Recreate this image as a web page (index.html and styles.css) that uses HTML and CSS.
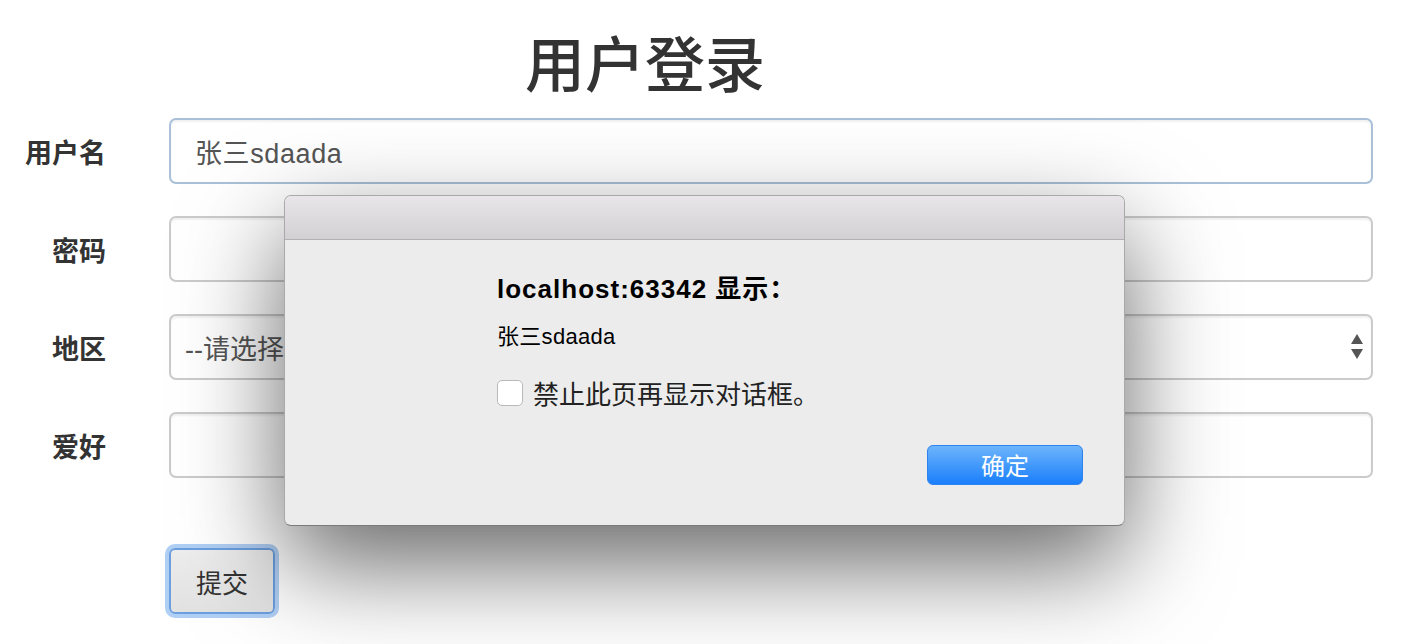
FILE: index.html
```html
<!DOCTYPE html>
<html lang="zh-CN">
<head>
<meta charset="utf-8">
<title>用户登录</title>
<link rel="stylesheet" href="styles.css">
</head>
<body>
<main class="page">
  <h1 class="title">用户登录</h1>
  <form class="form">
    <div class="row">
      <label class="label">用户名</label>
      <input class="control control-focus" type="text" value="张三sdaada">
    </div>
    <div class="row">
      <label class="label">密码</label>
      <input class="control" type="password" value="">
    </div>
    <div class="row">
      <label class="label">地区</label>
      <div class="control select">
        <span class="select-text">--请选择</span>
        <svg class="select-arrow" width="14" height="26" viewBox="0 0 14 26"><path d="M7 0 L13 10 L1 10 Z" fill="#555"/><path d="M1 15 L13 15 L7 25 Z" fill="#555"/></svg>
      </div>
    </div>
    <div class="row">
      <label class="label">爱好</label>
      <div class="control"></div>
    </div>
    <div class="row row-actions">
      <span></span>
      <div><button class="submit" type="button">提交</button></div>
    </div>
  </form>
</main>

<div class="dialog">
  <div class="dialog-titlebar"></div>
  <div class="dialog-body">
    <div class="dialog-content">
      <div class="dialog-heading">localhost:63342 显示：</div>
      <div class="dialog-message">张三sdaada</div>
      <label class="dialog-check"><span class="checkbox"></span><span>禁止此页再显示对话框。</span></label>
    </div>
    <div class="dialog-actions">
      <button class="ok" type="button">确定</button>
    </div>
  </div>
</div>
</body>
</html>
```

FILE: styles.css
```css
html, body {
  margin: 0;
  background: #fff;
}
body {
  font-family: "Liberation Sans", "Noto Sans CJK SC", sans-serif;
  color: #333;
  position: relative;
  height: 644px;
  overflow: hidden;
}
.page {
  padding: 24px 53px 0 0;
}
.title {
  margin: 0;
  font-size: 60px;
  font-weight: 500;
  line-height: 74px;
  text-align: center;
  padding-right: 83px;
  color: #333;
  font-family: "Noto Sans CJK SC", sans-serif;
}
.form {
  display: flex;
  flex-direction: column;
  gap: 32px;
  margin-top: 20px;
}
.row {
  display: grid;
  grid-template-columns: 106px 1fr;
  column-gap: 63px;
  align-items: center;
}
.label {
  text-align: right;
  font-weight: 700;
  font-size: 27px;
  color: #333;
  font-family: "Noto Sans CJK SC", sans-serif;
}
.control {
  display: block;
  width: 100%;
  height: 66px;
  box-sizing: border-box;
  border: 2px solid #cbcbcb;
  border-radius: 7px;
  padding: 0 24px;
  font-family: "Liberation Sans", "Noto Sans CJK SC", sans-serif;
  font-size: 27px;
  letter-spacing: 0.6px;
  color: #555;
  background: #fff;
  box-shadow: inset 0 2px 2px rgba(0,0,0,0.06);
  outline: none;
  margin: 0;
}
.control-focus {
  border-color: #a9c0d8;
}
.select {
  display: flex;
  align-items: center;
  justify-content: space-between;
  padding: 0 7px 0 14px;
  letter-spacing: 0;
}
.select-text {
  color: #555;
}
.row-actions {
  margin-top: 38px;
}
.submit {
  width: 106px;
  height: 66px;
  box-sizing: border-box;
  border: 2px solid #6b9fe0;
  border-radius: 6px;
  background: linear-gradient(#ededed, #e2e2e2);
  box-shadow: 0 0 0 4px rgba(112, 168, 236, 0.55);
  font-family: "Noto Sans CJK SC", sans-serif;
  font-size: 26px;
  color: #333;
  padding: 0;
  margin-left: 0;
}

.dialog {
  position: absolute;
  left: 284px;
  top: 195px;
  width: 841px;
  height: 331px;
  box-sizing: border-box;
  border: 1px solid #a9a9a9;
  border-bottom-color: #7a7a7a;
  border-radius: 7px;
  background: #ececec;
  box-shadow: 0 38px 100px rgba(0,0,0,0.6);
  display: flex;
  flex-direction: column;
  overflow: hidden;
}
.dialog-titlebar {
  height: 43px;
  flex: none;
  background: linear-gradient(#e8e6e8, #d2d0d2);
  border-bottom: 1px solid #b1b1b1;
}
.dialog-body {
  flex: 1;
  display: flex;
  flex-direction: column;
  padding: 34px 41px 40px 212px;
}
.dialog-heading {
  font-size: 26px;
  line-height: 30px;
  font-weight: 700;
  color: #000;
  letter-spacing: 1px;
}
.dialog-message {
  margin-top: 20px;
  font-size: 22px;
  line-height: 26px;
  color: #000;
  letter-spacing: 0.3px;
}
.dialog-check {
  margin-top: 29px;
  display: flex;
  align-items: center;
  gap: 10px;
  font-family: "Noto Sans CJK SC", sans-serif;
  font-size: 26px;
  line-height: 28px;
  color: #222;
}
.checkbox {
  width: 26px;
  height: 26px;
  box-sizing: border-box;
  border: 1px solid #b9b9b9;
  border-radius: 5px;
  background: #fff;
  flex: none;
}
.dialog-actions {
  margin-top: auto;
  display: flex;
  justify-content: flex-end;
}
.ok {
  width: 156px;
  height: 40px;
  box-sizing: border-box;
  border: 1px solid #2f83ef;
  border-radius: 6px;
  background: linear-gradient(#6db4fb, #1a7ffb);
  color: #fff;
  font-family: "Noto Sans CJK SC", sans-serif;
  font-size: 24px;
  line-height: 1;
  padding: 0;
}
```
